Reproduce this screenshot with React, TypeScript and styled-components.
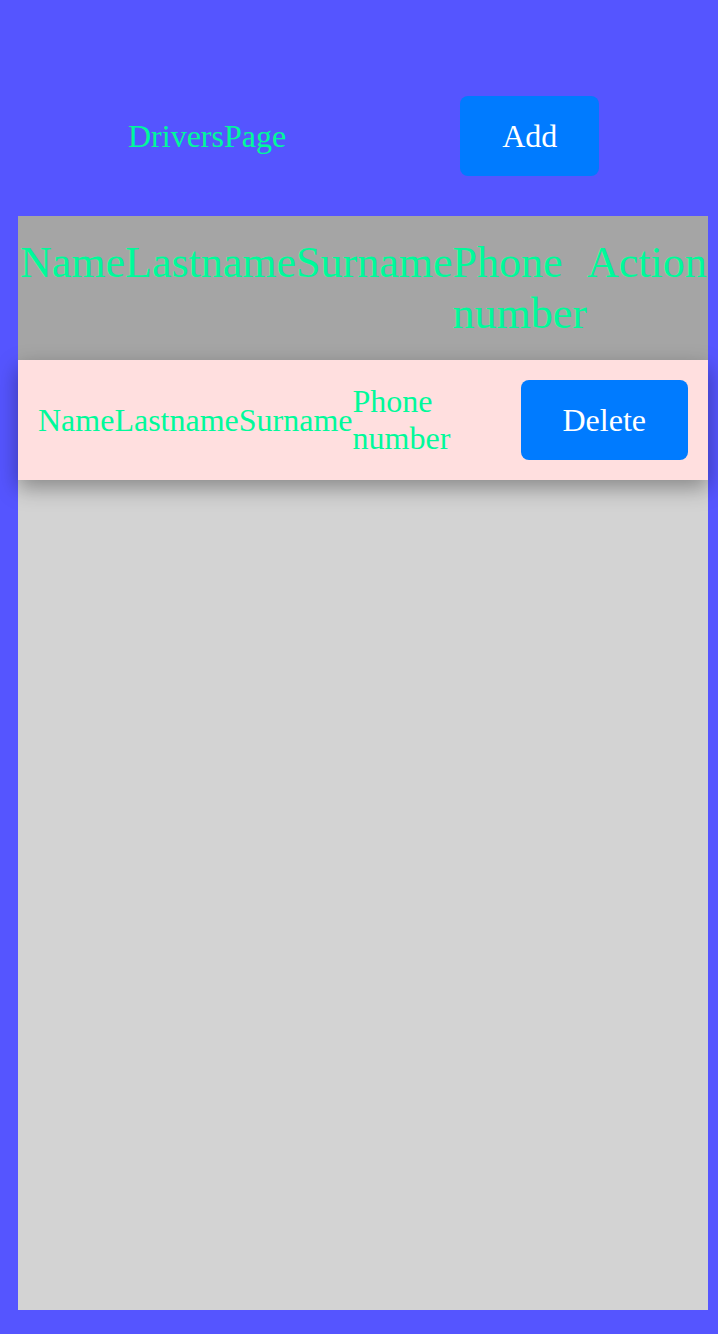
import React from "react";
import styled, { createGlobalStyle } from "styled-components";

const GlobalStyle = createGlobalStyle`
  html, body {
    margin: 0;
    padding: 0;
    background: #5555ff;
  }
  body {
    font-family: "Liberation Serif", "Times New Roman", serif;
  }
`;

const Page = styled.div`
  background: #5555ff;
  min-height: 1334px;
  padding: 0 10px 24px 18px;
  box-sizing: border-box;
`;

const TopBar = styled.header`
  display: flex;
  align-items: center;
  gap: 174px;
  padding: 96px 0 40px 110px;
`;

const Title = styled.h1`
  margin: 0;
  font-size: 32px;
  font-weight: normal;
  color: #00fa9a;
`;

const ActionButton = styled.button`
  font-family: "Liberation Serif", "Times New Roman", serif;
  font-size: 32px;
  color: #ffffff;
  background: #007bff;
  border: none;
  border-radius: 8px;
  height: 80px;
  padding: 0 42px;
  flex-shrink: 0;
  cursor: pointer;
`;

const Panel = styled.main`
  background: #d3d3d3;
  height: 1094px;
  display: flex;
  flex-direction: column;
`;

const HeadRow = styled.div`
  display: flex;
  align-items: flex-start;
  background: #a5a5a5;
  padding: 21px 2px 21px;
`;

const HeadCell = styled.div`
  font-size: 44px;
  color: #00fa9a;
`;

const DataRow = styled.div`
  display: flex;
  align-items: center;
  background: #ffdfdf;
  padding: 20px;
  box-shadow: 0 8px 20px rgba(0, 0, 0, 0.35);
`;

const DataCell = styled.div`
  font-size: 32px;
  color: #00fa9a;
`;

const columns = ["Name", "Lastname", "Surname", "Phone number"];

export default function App() {
  return (
    <>
      <GlobalStyle />
      <Page>
        <TopBar>
          <Title>DriversPage</Title>
          <ActionButton>Add</ActionButton>
        </TopBar>
        <Panel>
          <HeadRow>
            {columns.map((c) => (
              <HeadCell key={c}>{c}</HeadCell>
            ))}
            <HeadCell>Action</HeadCell>
          </HeadRow>
          <DataRow>
            {columns.map((c) => (
              <DataCell key={c}>{c}</DataCell>
            ))}
            <ActionButton>Delete</ActionButton>
          </DataRow>
        </Panel>
      </Page>
    </>
  );
}
